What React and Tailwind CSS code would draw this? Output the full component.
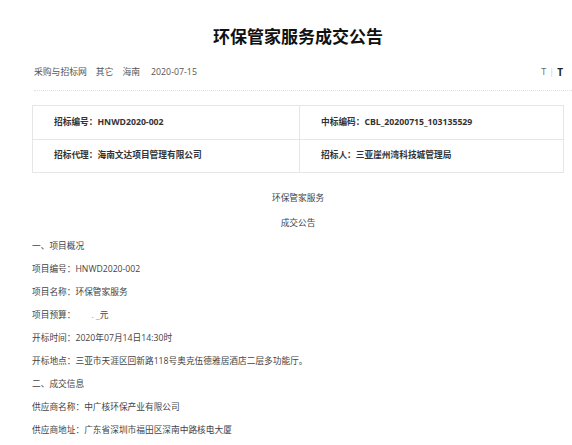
import React from 'react';

const infoRows = [
    [['招标编号：', 'HNWD2020-002'], ['中标编码：', 'CBL_20200715_103135529']],
    [['招标代理：', '海南文达项目管理有限公司'], ['招标人：', '三亚崖州湾科技城管理局']],
];

const App = () => {
    return (
        <div className="w-[572px] h-[445px] overflow-hidden bg-white text-[#444] font-['Open_Sans','Noto_Sans_CJK_SC',sans-serif]">
            <div className="pl-[32px] pr-[8px]">
                <h1 className="pt-[25px] text-center text-[17px] leading-[24px] font-bold text-[#111]">
                    环保管家服务成交公告
                </h1>

                <div className="mt-[16px] flex items-center justify-between text-[8.8px] leading-[14px] text-[#555]">
                    <div className="flex gap-[9px] pl-[2px]">
                        <span>采购与招标网</span>
                        <span>其它</span>
                        <span className="mr-[2px]">海南</span>
                        <span>2020-07-15</span>
                    </div>
                    <div className="flex items-center gap-[3px] mr-[1px] text-[9px]">
                        <span className="text-[#666]">T</span>
                        <span className="text-[#ccc]">|</span>
                        <span className="font-bold text-[#222] text-[10px]">T</span>
                    </div>
                </div>

                <div className="mt-[11px] -mr-[8px] ml-[2px] border-t border-dotted border-[#ddd]" />

                <div className="mt-[14px] border border-[#e6e6e6] text-[8.7px] font-bold text-[#333]">
                    {infoRows.map((row, i) => (
                        <div key={i} className={`grid grid-cols-[266px_1fr] h-[33px] ${i > 0 ? 'border-t border-[#e6e6e6]' : ''}`}>
                            {row.map(([label, value], j) => (
                                <div key={j} className={`flex items-center pl-[21px] ${j > 0 ? 'border-l border-[#e6e6e6]' : ''}`}>
                                    <span>{label}</span>
                                    <span>{value}</span>
                                </div>
                            ))}
                        </div>
                    ))}
                </div>

                <div className="mt-[14px] text-[8.7px] leading-[23px]">
                    <p className="text-center">环保管家服务</p>
                    <p className="text-center mt-[2px]">成交公告</p>
                    <p>一、项目概况</p>
                    <p>项目编号：HNWD2020-002</p>
                    <p>项目名称：环保管家服务</p>
                    <p>项目预算：<span className="ml-[16px] text-[#999]">. _</span>元</p>
                    <p>开标时间：2020年07月14日14:30时</p>
                    <p>开标地点：三亚市天涯区回新路118号奥克伍德雅居酒店二层多功能厅。</p>
                    <p>二、成交信息</p>
                    <p>供应商名称：中广核环保产业有限公司</p>
                    <p>供应商地址：广东省深圳市福田区深南中路核电大厦</p>
                </div>
            </div>
        </div>
    );
};

export default App;
